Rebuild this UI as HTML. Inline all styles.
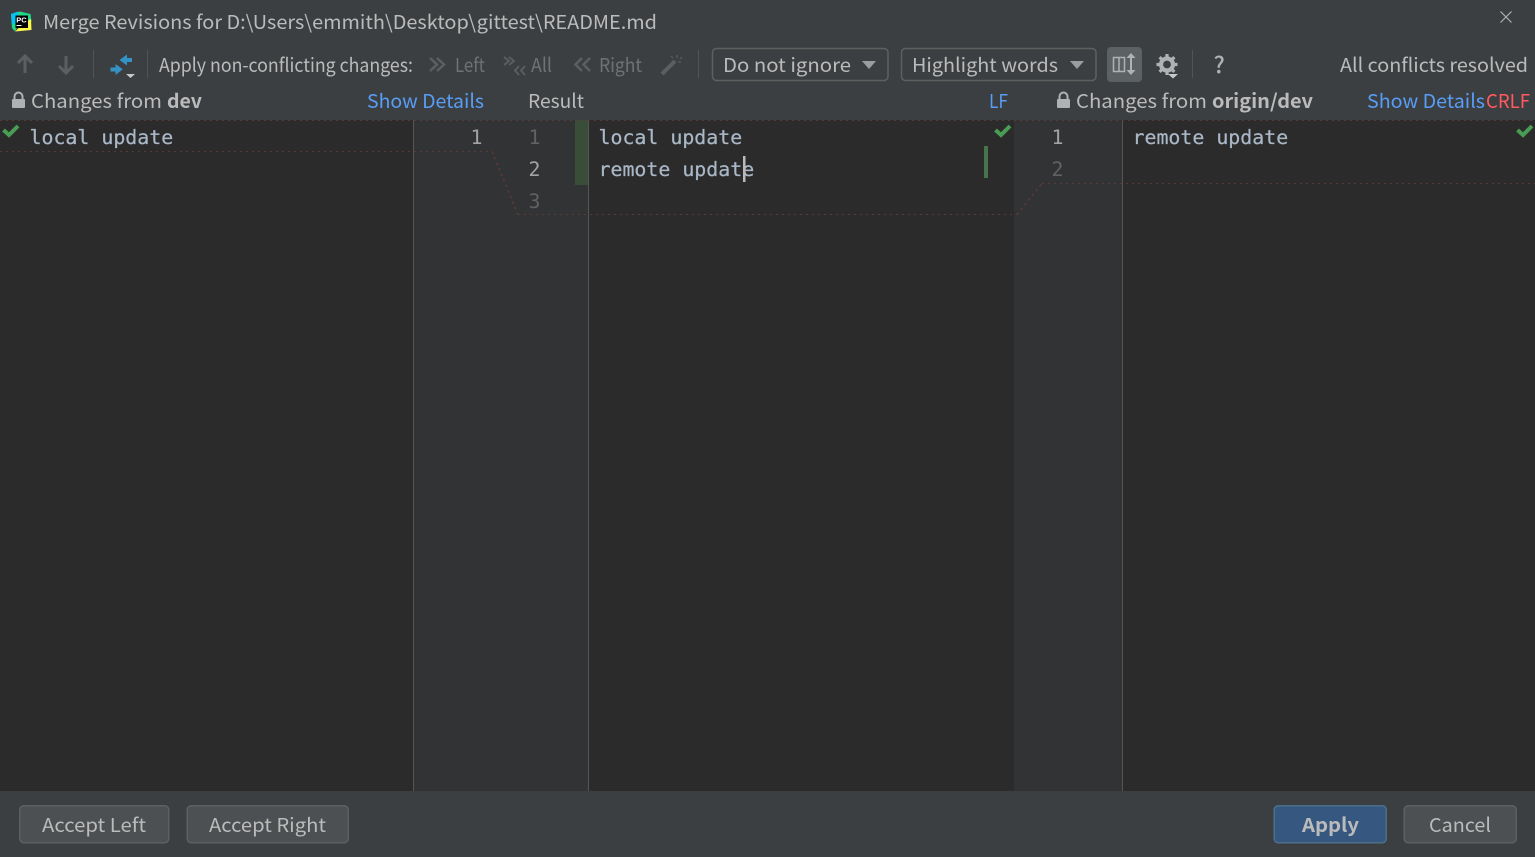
<!DOCTYPE html>
<html><head><meta charset="utf-8"><title>Merge Revisions</title>
<style>
html,body{margin:0;padding:0;background:#3c3f41;width:1535px;height:857px;overflow:hidden}
svg{display:block;position:absolute;left:0;top:0}
.u{font-family:"Noto Sans CJK SC","Liberation Sans",sans-serif;font-size:19.2px;fill:#bbbbbb}
.b{font-weight:700}
.d{fill:#6f7274}
.l{fill:#589df6}
.m{font-family:"DejaVu Sans Mono","Liberation Mono",monospace;font-size:19.9px;fill:#a9b7c6;stroke:#a9b7c6;stroke-width:.25}
.n{font-family:"DejaVu Sans Mono","Liberation Mono",monospace;font-size:19.9px;fill:#606366}
.na{fill:#a4a3a3}
.dot{fill:none;stroke:#573a35;stroke-width:1;stroke-dasharray:2 4;shape-rendering:crispEdges}
.dg{fill:none;stroke:#5b3a36;stroke-width:1.6;stroke-dasharray:2.500 3.500}
</style></head><body>
<svg width="1535" height="857" viewBox="0 0 1535 857" xmlns="http://www.w3.org/2000/svg">
<rect width="1535" height="857" fill="#3c3f41"/>
<!-- editors -->
<rect x="0" y="120" width="1535" height="671" fill="#2b2b2b"/>
<rect x="414" y="120" width="174" height="671" fill="#313335"/>
<rect x="1014" y="120" width="108" height="671" fill="#313335"/>
<rect x="575" y="120" width="13" height="65" fill="#3a4d38"/>
<rect x="413" y="120" width="1" height="671" fill="#555555"/>
<rect x="588" y="120" width="1" height="671" fill="#555555"/>
<rect x="1122" y="120" width="1" height="671" fill="#555555"/>
<path class="dot" d="M0 120.500H1535M0 151.500H492M518 214.500H1017M1042 183.500H1535"/>
<path class="dg" d="M492 151.500L518 214.500M1017 214.500L1042 183.500"/>
<!-- title -->
<g>
<path d="M11 14L20 11.500L24 13L15 31.500L12 28Z" fill="#21d789"/>
<path d="M11 14L18 11.500L17 22L12 25Z" fill="#07c3f2"/>
<path d="M20 11.500L30.500 14L31.500 22L25 22Z" fill="#21d789"/>
<path d="M15 31.500L31.500 30L31 19L25 22Z" fill="#fcf84a"/>
<rect x="15.500" y="15.500" width="12.500" height="12.500" fill="#000"/>
<text x="16.300" y="22.500" font-family="Liberation Sans,sans-serif" font-size="7.500" font-weight="700" fill="#fff">PC</text>
<rect x="16.500" y="25" width="5" height="1" fill="#fff"/>
</g>
<text class="u" x="43" y="29" textLength="614" lengthAdjust="spacingAndGlyphs">Merge Revisions for D:\Users\emmith\Desktop\gittest\README.md</text>
<path d="M1500.500 11.500L1511.500 22.500M1511.500 11.500L1500.500 22.500" stroke="#afb1b3" stroke-width="1.200" fill="none"/>
<!-- toolbar -->
<path d="M25 56V73M18 63L25 56L32 63" stroke="#5c5f61" stroke-width="3" fill="none"/>
<path d="M66 56V73M59 66L66 73L73 66" stroke="#5c5f61" stroke-width="3" fill="none"/>
<rect x="93" y="50" width="1" height="28" fill="#515456"/>
<path d="M119.500 60L127 54.500V58H132V62H127V65.500Z" fill="#3592c4"/>
<path d="M122.800 69.300L115.500 64V67.500H110.500V71.500H115.500V75Z" fill="#3592c4"/>
<path d="M126 74H135L130.500 78Z" fill="#c8c8c8"/>
<rect x="147" y="50" width="1" height="28" fill="#515456"/>
<text class="u" x="159" y="72" textLength="254" lengthAdjust="spacingAndGlyphs">Apply non-conflicting changes:</text>
<path d="M430 58L437 64.500L430 71M437 58L444 64.500L437 71" stroke="#5c5f61" stroke-width="2.500" fill="none"/>
<text class="u d" x="455" y="72" textLength="30" lengthAdjust="spacingAndGlyphs">Left</text>
<path d="M504 57L509 61L504 65M509 57L514 61L509 65" stroke="#5c5f61" stroke-width="1.800" fill="none"/>
<path d="M519 66L515 70.500L519 75M525 66L521 70.500L525 75" stroke="#5c5f61" stroke-width="1.800" fill="none"/>
<text class="u d" x="531" y="72" textLength="21" lengthAdjust="spacingAndGlyphs">All</text>
<path d="M582 58L575.500 64.500L582 71M590 58L583.500 64.500L590 71" stroke="#5c5f61" stroke-width="2.500" fill="none"/>
<text class="u d" x="599" y="72" textLength="43" lengthAdjust="spacingAndGlyphs">Right</text>
<path d="M662 74L675 61" stroke="#5c5f61" stroke-width="4" fill="none"/>
<path d="M677 55V58M681 62H678M682 57L680 59M671 56L673 58" stroke="#5c5f61" stroke-width="1.200" fill="none"/>
<rect x="698" y="50" width="1" height="28" fill="#515456"/>
<rect x="712.500" y="48.500" width="175.500" height="32" rx="4" fill="#3c3f41" stroke="#5e6060" stroke-width="1.500"/>
<text class="u" x="723" y="72" textLength="128" lengthAdjust="spacingAndGlyphs">Do not ignore</text>
<path d="M862 61H876L869 69Z" fill="#9a9d9f"/>
<rect x="901.500" y="48.500" width="194.500" height="32" rx="4" fill="#3c3f41" stroke="#5e6060" stroke-width="1.500"/>
<text class="u" x="912" y="72" textLength="146" lengthAdjust="spacingAndGlyphs">Highlight words</text>
<path d="M1070 61H1084L1077 69Z" fill="#9a9d9f"/>
<rect x="1107" y="47" width="35" height="35" rx="4" fill="#5c6164"/>
<path d="M1113.500 57.500H1124.500V71.500H1113.500ZM1119 57.500V71.500" stroke="#afb1b3" stroke-width="1.500" fill="none"/>
<path d="M1131 55V73" stroke="#afb1b3" stroke-width="2" fill="none"/>
<path d="M1126.500 58L1131 53L1135.500 58ZM1126.500 70L1131 75L1135.500 70Z" fill="#afb1b3"/>
<circle cx="1167" cy="64.500" r="6" fill="none" stroke="#afb1b3" stroke-width="4.200"/>
<path d="M1167 54V75M1156.500 64.500H1177.500M1159.600 57.100L1174.400 71.900M1174.400 57.100L1159.600 71.900" stroke="#afb1b3" stroke-width="3.200" fill="none" stroke-dasharray="3.500 14"/>
<path d="M1168 74H1178L1173 78.500Z" fill="#c8c8c8"/>
<rect x="1192" y="50" width="1" height="28" fill="#515456"/>
<text x="1213.500" y="73" font-family="Noto Sans CJK SC,sans-serif" font-size="23" font-weight="500" fill="#afb1b3">?</text>
<text class="u" x="1340" y="72" textLength="188" lengthAdjust="spacingAndGlyphs">All conflicts resolved</text>
<!-- headers -->
<path d="M14.500 99V96.500a4 4 0 0 1 8 0V99" fill="none" stroke="#afb1b3" stroke-width="2"/>
<rect x="12" y="99" width="13" height="9" rx="1" fill="#afb1b3"/>
<text class="u" x="31" y="108" textLength="131" lengthAdjust="spacingAndGlyphs">Changes from</text>
<text class="u b" x="167" y="108" textLength="35" lengthAdjust="spacingAndGlyphs">dev</text>
<text class="u l" x="367" y="108" textLength="117" lengthAdjust="spacingAndGlyphs">Show Details</text>
<text class="u" x="528" y="108" textLength="56" lengthAdjust="spacingAndGlyphs">Result</text>
<text class="u l" x="989" y="108" textLength="19" lengthAdjust="spacingAndGlyphs">LF</text>
<path d="M1059.500 99V96.500a4 4 0 0 1 8 0V99" fill="none" stroke="#afb1b3" stroke-width="2"/>
<rect x="1057" y="99" width="13" height="9" rx="1" fill="#afb1b3"/>
<text class="u" x="1076" y="108" textLength="131" lengthAdjust="spacingAndGlyphs">Changes from</text>
<text class="u b" x="1212" y="108" textLength="101" lengthAdjust="spacingAndGlyphs">origin/dev</text>
<text class="u l" x="1367" y="108" textLength="118" lengthAdjust="spacingAndGlyphs">Show Details</text>
<text class="u" x="1486" y="108" textLength="44" lengthAdjust="spacingAndGlyphs" style="fill:#ff5a5f">CRLF</text>
<!-- code -->
<text class="m" x="29.500" y="144">local update</text>
<text class="n na" x="470.500" y="144">1</text>
<text class="n" x="528.500" y="144">1</text>
<text class="n na" x="528.500" y="176">2</text>
<text class="n" x="528.500" y="208">3</text>
<text class="m" x="598.500" y="144">local update</text>
<text class="m" x="598.500" y="176">remote update</text>
<rect x="743" y="156" width="2.500" height="26" fill="#bbbbbb"/>
<rect x="984" y="146" width="4" height="32" fill="#47734d"/>
<text class="n na" x="1051.500" y="144">1</text>
<text class="n" x="1051.500" y="176">2</text>
<text class="m" x="1132.500" y="144">remote update</text>
<g fill="none" stroke="#499c54" stroke-width="4">
<path d="M3.500 130L9 135L18 126"/>
<path d="M995.500 130L1001 135L1010 126"/>
<path d="M1517.500 130L1523 135L1532 126"/>
</g>
<!-- footer -->
<g stroke="#5e6060" stroke-width="1.500" fill="#4c5052">
<rect x="19.750" y="805.750" width="149" height="37" rx="4"/>
<rect x="187.250" y="805.750" width="161" height="37" rx="4"/>
<rect x="1404.250" y="805.750" width="112" height="37" rx="4"/>
</g>
<rect x="1274.250" y="805.750" width="112" height="37" rx="4" fill="#365880" stroke="#4c708c" stroke-width="1.500"/>
<text class="u" x="42" y="832" textLength="104" lengthAdjust="spacingAndGlyphs">Accept Left</text>
<text class="u" x="209" y="832" textLength="117" lengthAdjust="spacingAndGlyphs">Accept Right</text>
<text class="u b" x="1302" y="832" textLength="57" lengthAdjust="spacingAndGlyphs">Apply</text>
<text class="u" x="1429" y="832" textLength="62" lengthAdjust="spacingAndGlyphs">Cancel</text>
</svg>
</body></html>
